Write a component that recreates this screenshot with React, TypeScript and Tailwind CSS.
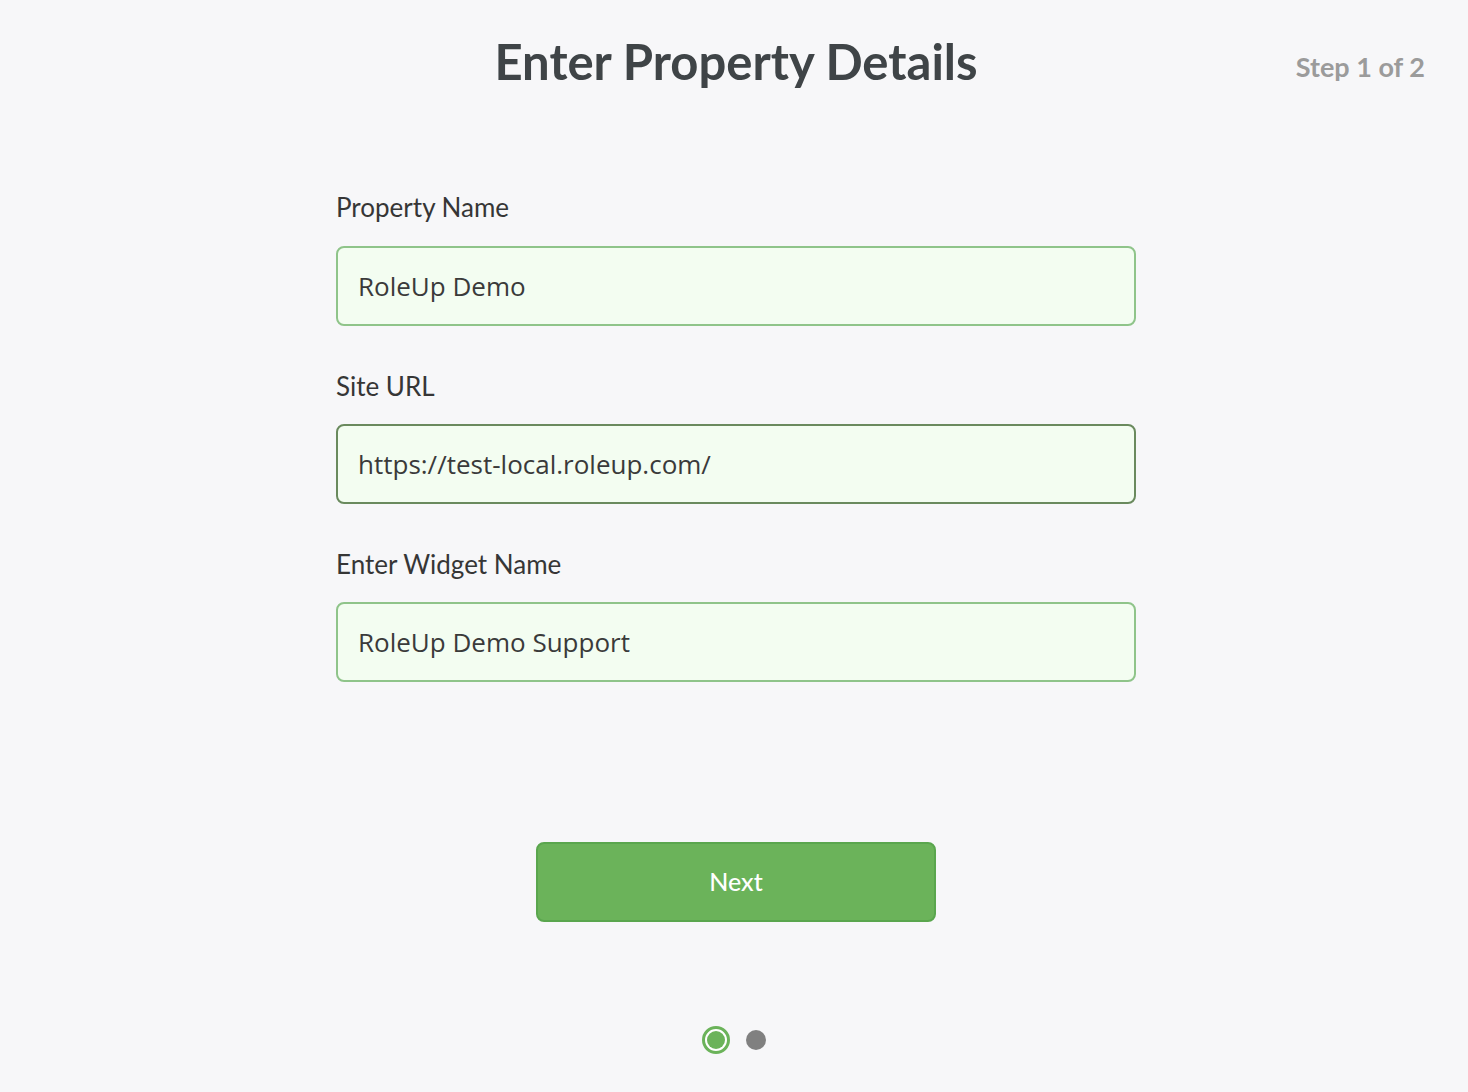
const FIELDS = [
  { label: "Property Name", value: "RoleUp Demo", focused: false },
  { label: "Site URL", value: "https://test-local.roleup.com/", focused: true },
  { label: "Enter Widget Name", value: "RoleUp Demo Support", focused: false },
];

export default function App() {
  return (
    <div className="min-h-[1092px] w-full bg-[#f7f7f9] pl-[4px] font-['Lato',sans-serif] text-[#3f4447]">
      <div className="grid grid-cols-[1fr_auto_1fr] items-center pt-[30px]">
        <div />
        <h1 className="text-[49px] font-bold leading-[62px] text-[#3f4447]">Enter Property Details</h1>
        <div className="flex justify-end pr-[43px] pt-[12px]">
          <span className="text-[27px] font-bold text-[#9b9b9b]">Step 1 of 2</span>
        </div>
      </div>

      <div className="mx-auto mt-[101px] flex w-[800px] flex-col gap-[46px]">
        {FIELDS.map((f, i) => (
          <div key={f.label} className={i === 0 ? "flex flex-col gap-[25px]" : "flex flex-col gap-[24px]"}>
            <label className="text-[26px] leading-[28px] text-[#363636]">{f.label}</label>
            <input
              defaultValue={f.value}
              className={
                f.focused
                  ? "h-[80px] w-full rounded-[8px] border-2 border-[#6a8a5e] bg-[#f3fdf1] px-[20px] font-['Open_Sans',sans-serif] text-[26px] text-[#3a3a3a] outline-none"
                  : "h-[80px] w-full rounded-[8px] border-2 border-[#8fc48a] bg-[#f3fdf1] px-[20px] font-['Open_Sans',sans-serif] text-[26px] text-[#3a3a3a] outline-none"
              }
            />
          </div>
        ))}
      </div>

      <div className="mt-[160px] flex justify-center">
        <button className="h-[80px] w-[400px] rounded-[8px] border-2 border-[#5aa64e] bg-[#6bb35a] text-[25px] font-medium text-white">
          Next
        </button>
      </div>

      <div className="mt-[104px] flex items-center justify-center gap-[12px]">
        <span className="flex h-[28px] w-[28px] items-center justify-center rounded-full border-[3px] border-[#6bb35a] bg-white">
          <span className="h-[18px] w-[18px] rounded-full bg-[#6bb35a]" />
        </span>
        <span className="flex h-[28px] w-[28px] items-center justify-center">
          <span className="h-[20px] w-[20px] rounded-full bg-[#808080]" />
        </span>
      </div>
    </div>
  );
}
